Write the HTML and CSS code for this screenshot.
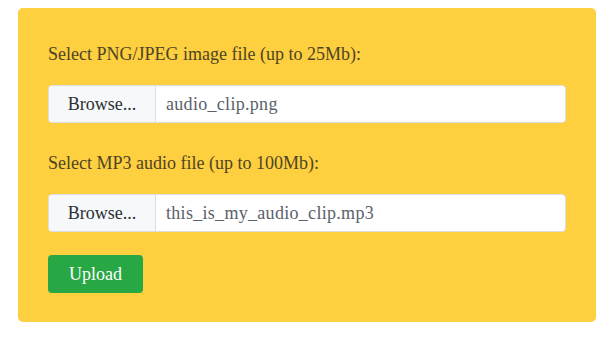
FILE: index.html
```html
<!DOCTYPE html>
<html lang="en">
<head>
<meta charset="utf-8">
<title>Upload</title>
<link rel="stylesheet" href="styles.css">
</head>
<body>
<form class="card">
  <label class="field-label">Select PNG/JPEG image file (up to 25Mb):</label>
  <div class="file-group">
    <span class="browse">Browse...</span>
    <span class="file-name">audio_clip.png</span>
  </div>
  <label class="field-label second">Select MP3 audio file (up to 100Mb):</label>
  <div class="file-group">
    <span class="browse">Browse...</span>
    <span class="file-name">this_is_my_audio_clip.mp3</span>
  </div>
  <button type="button" class="upload">Upload</button>
</form>
</body>
</html>
```
FILE: styles.css
```css
html, body {
  background: #ffffff;
}
body {
  margin: 8px 15px 8px 18px;
  font-family: "Liberation Serif", "DejaVu Serif", serif;
  font-size: 18px;
}
.card {
  background: #fecf3e;
  border-radius: 5px;
  padding: 34px 30px 29px 30px;
  display: flex;
  flex-direction: column;
  align-items: stretch;
}
.field-label {
  display: block;
  line-height: 24px;
  color: #4d4426;
  margin-bottom: 19px;
}
.field-label.second {
  margin-top: 28px;
}
.file-group {
  display: flex;
  height: 38px;
  box-sizing: border-box;
  border: 1px solid #dadde1;
  border-radius: 4px;
  background: #ffffff;
  overflow: hidden;
}
.browse {
  width: 107px;
  flex: none;
  display: flex;
  align-items: center;
  justify-content: center;
  background: #f6f8fa;
  color: #2b2f33;
  border-right: 1px solid #dadde1;
  box-sizing: border-box;
}
.file-name {
  display: flex;
  align-items: center;
  padding-left: 10px;
  color: #5a616a;
  letter-spacing: 0.3px;
}
.upload {
  align-self: flex-start;
  margin-top: 23px;
  width: 95px;
  height: 38px;
  border: none;
  border-radius: 4px;
  background: #28a745;
  color: #ffffff;
  font-family: inherit;
  font-size: 18px;
  padding: 0;
}
```
